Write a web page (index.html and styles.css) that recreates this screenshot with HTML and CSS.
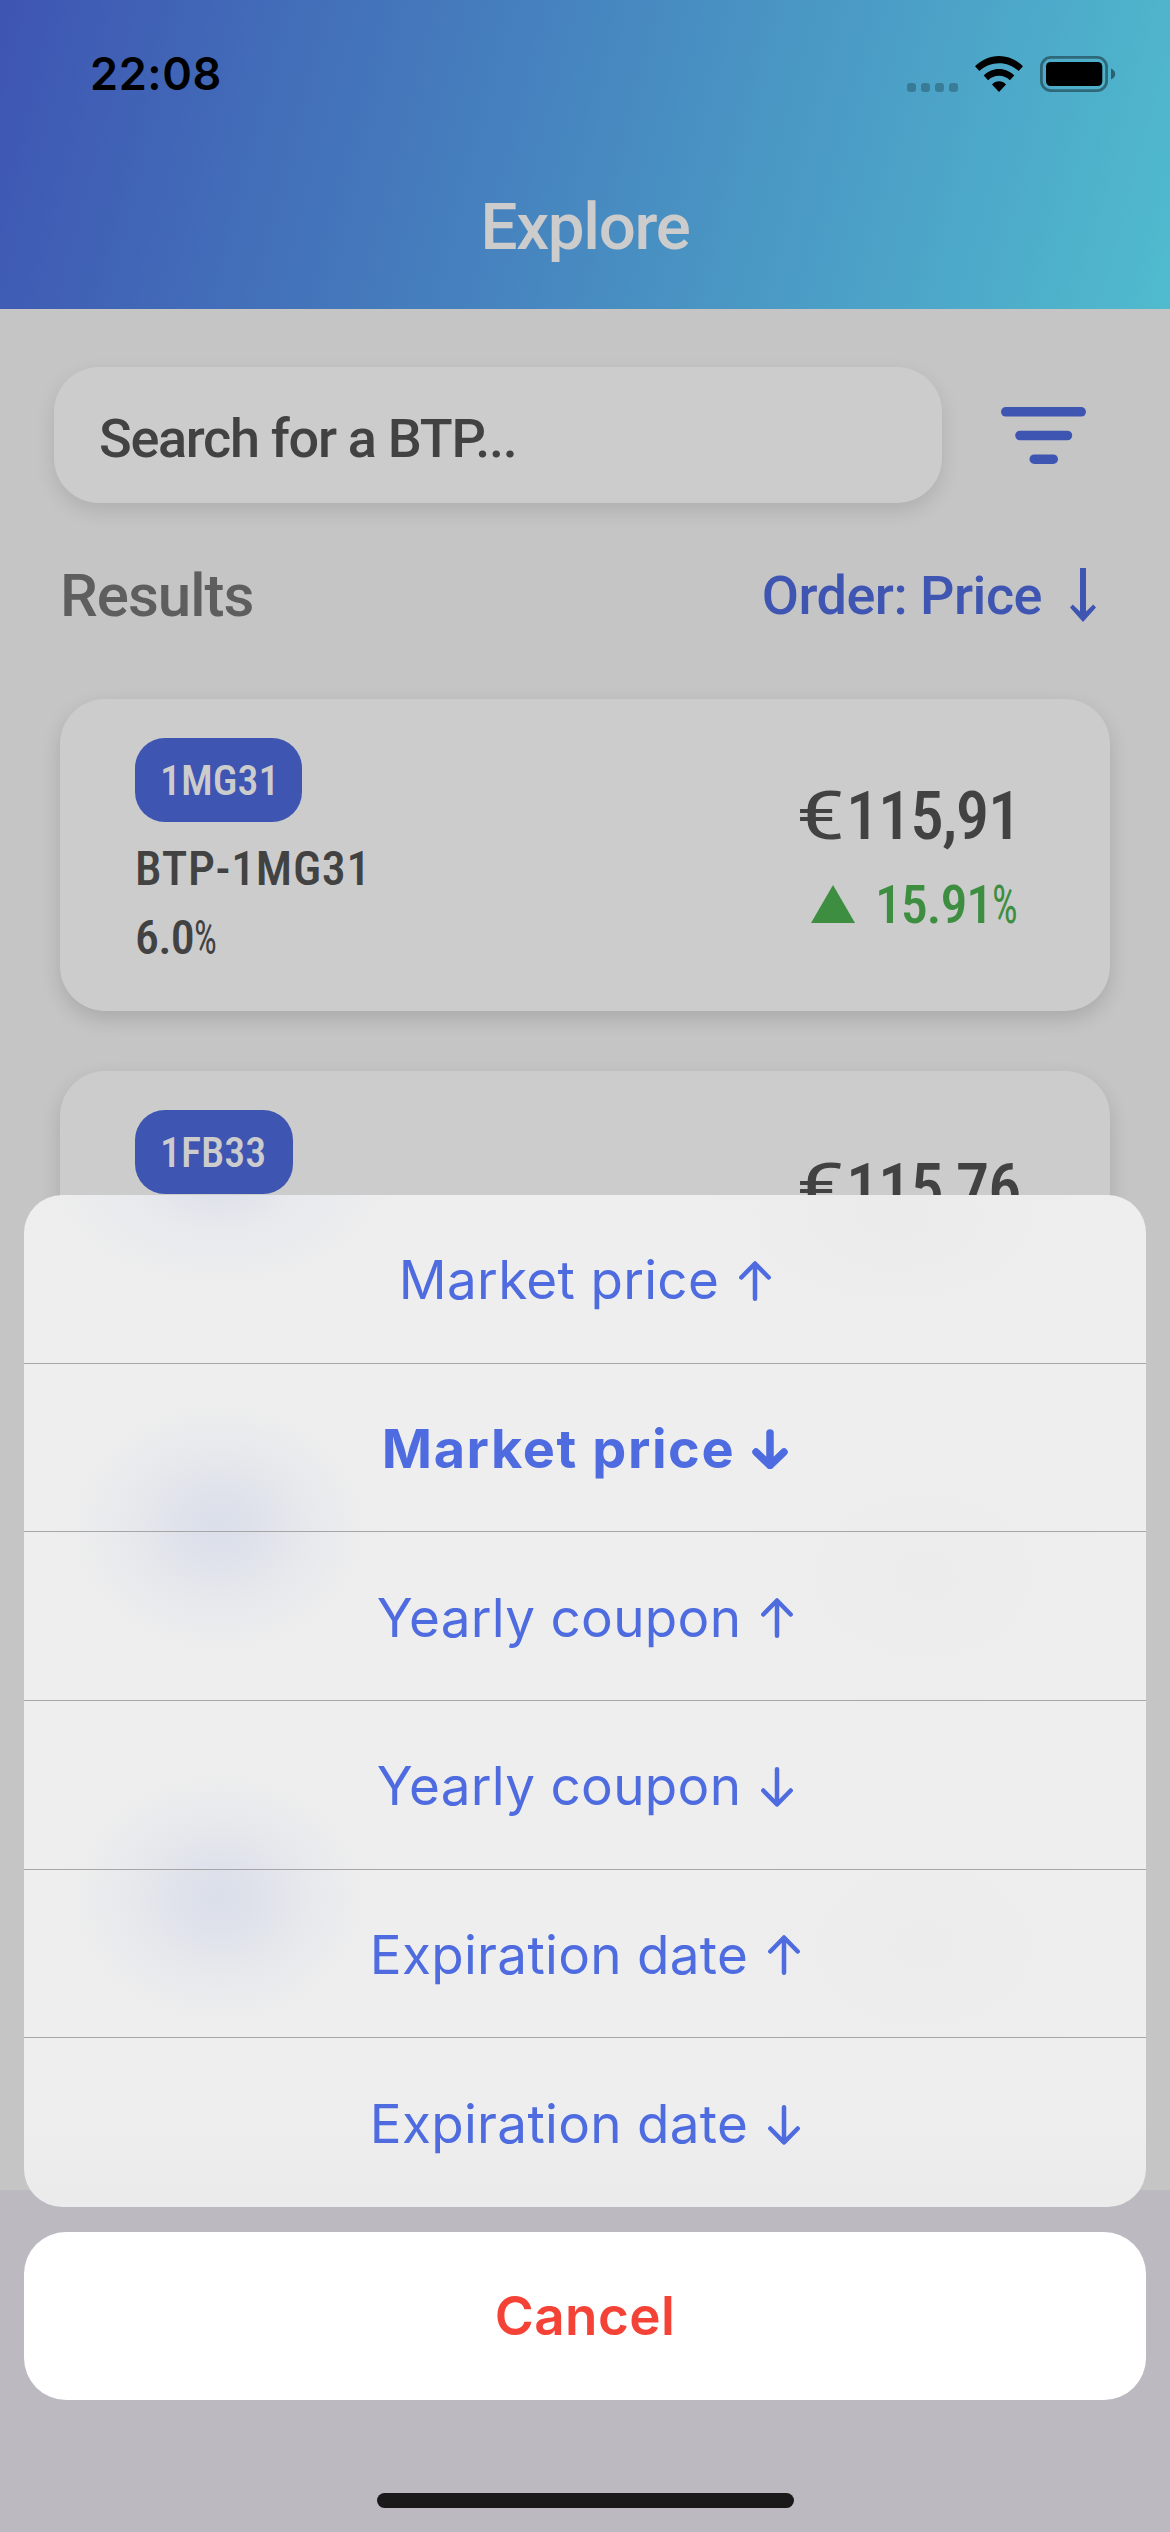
FILE: index.html
```html
<!DOCTYPE html>
<html lang="en">
<head>
<meta charset="utf-8">
<title>Explore</title>
<link rel="stylesheet" href="styles.css">
</head>
<body>
<div class="screen">
  <header class="header">
    <div class="status">
      <span class="time">22:08</span>
      <div class="status-icons">
        <svg class="dots" viewBox="0 0 51 9"><rect width="9" height="9" rx="3"/><rect x="14" width="9" height="9" rx="3"/><rect x="28" width="9" height="9" rx="3"/><rect x="42" width="9" height="9" rx="3"/></svg>
        <svg class="wifi" viewBox="0 0 48 36"><path d="M24 0C33 0 41.500 3.800 48 10.200L43.600 15C38.400 10.100 31.600 7.200 24 7.200S9.600 10.100 4.400 15L0 10.200C6.500 3.800 15 0 24 0ZM24 13C29.900 13 35.300 15.500 39.300 19.400L34.900 24.200C32 21.400 28.200 19.800 24 19.800S16 21.400 13.100 24.200L8.700 19.400C12.700 15.500 18.100 13 24 13ZM24 25.200C26.700 25.200 29.100 26.300 31 28.400L24 36L17 28.400C18.900 26.300 21.300 25.200 24 25.200Z"/></svg>
        <svg class="battery" viewBox="0 0 76 36"><rect x="1.400" y="1.400" width="65.200" height="33.200" rx="9.500" fill="none" stroke="#000" stroke-opacity=".4" stroke-width="2.800"/><rect x="6" y="6" width="56.300" height="24" rx="4.500"/><path d="M71 12.500C73.600 13.600 75.200 15.500 75.200 18S73.600 22.400 71 23.500Z" fill-opacity=".45"/></svg>
      </div>
    </div>
    <h1 class="title">Explore</h1>
  </header>

  <main class="content">
    <div class="search-row">
      <div class="search">Search for a BTP...</div>
      <svg class="filter" viewBox="0 0 85 57"><rect width="85" height="9.600" rx="4.800"/><rect x="14.200" y="23.700" width="57" height="9.600" rx="4.800"/><rect x="28.500" y="47.400" width="28.500" height="9.600" rx="4.800"/></svg>
    </div>
    <div class="results-row">
      <h2 class="results">Results</h2>
      <div class="order">
        <span>Order: Price</span>
        <svg class="order-arrow" viewBox="0 0 26 54"><path d="M10 0H16V43.500L23.300 36.600L26 39.600L13 54L0 39.600L2.700 36.600L10 43.500Z"/></svg>
      </div>
    </div>
    <div class="cards">
      <article class="card">
        <div class="info">
          <span class="badge">1MG31</span>
          <div class="line name">BTP-1MG31</div>
          <div class="line rate">6.0<span class="pct">%</span></div>
        </div>
        <div class="quote">
          <div class="price"><span class="euro">€</span>115,91</div>
          <div class="change">
            <svg class="up" viewBox="0 0 44 38"><path d="M22 0L44 38H0Z"/></svg>
            <div>15.91<span class="pct">%</span></div>
          </div>
        </div>
      </article>
      <article class="card">
        <div class="info">
          <span class="badge">1FB33</span>
        </div>
        <div class="quote">
          <div class="price"><span class="euro">€</span>115,76</div>
        </div>
      </article>
    </div>
  </main>

  <div class="tabbar"></div>

  <div class="overlay">
    <div class="sheet">
      <button class="option"><span>Market price</span><svg class="arrow" viewBox="0 0 32 40"><path d="M16 37.700V3M2.300 16.500L16 2.500L29.700 16.500"/></svg></button>
      <button class="option selected"><span>Market price</span><svg class="arrow" viewBox="0 0 36 40"><path d="M18 4V36M4 23L18 36.500L32 23"/></svg></button>
      <button class="option"><span>Yearly coupon</span><svg class="arrow" viewBox="0 0 32 40"><path d="M16 37.700V3M2.300 16.500L16 2.500L29.700 16.500"/></svg></button>
      <button class="option"><span>Yearly coupon</span><svg class="arrow" viewBox="0 0 32 40"><path d="M16 2.300V37M2.300 23.500L16 37.500L29.700 23.500"/></svg></button>
      <button class="option"><span>Expiration date</span><svg class="arrow" viewBox="0 0 32 40"><path d="M16 37.700V3M2.300 16.500L16 2.500L29.700 16.500"/></svg></button>
      <button class="option"><span>Expiration date</span><svg class="arrow" viewBox="0 0 32 40"><path d="M16 2.300V37M2.300 23.500L16 37.500L29.700 23.500"/></svg></button>
    </div>
    <button class="cancel">Cancel</button>
    <div class="home-indicator"></div>
  </div>
</div>
</body>
</html>
```
FILE: styles.css
```css
* { box-sizing: border-box; }

body { margin: 0; }

h1, h2 { margin: 0; }

button {
  border: 0;
  padding: 0;
  background: none;
}

svg { display: block; flex: none; }

.screen {
  position: relative;
  width: 1170px;
  height: 2532px;
  overflow: hidden;
  display: flex;
  flex-direction: column;
  background: #c5c5c5;
  font-family: Roboto, sans-serif;
  font-weight: 500;
  white-space: nowrap;
}

/* Header */
.header {
  height: 309px;
  flex: none;
  background: linear-gradient(104.8deg, #3e55b2, #50bbce);
}

.status {
  height: 148px;
  display: flex;
  align-items: center;
  justify-content: space-between;
  padding: 0 54px 0 90px;
}

.time {
  font: 600 45px/148px Inter, sans-serif;
  letter-spacing: 0.6px;
}

.status-icons { display: flex; align-items: center; }
.dots { width: 51px; height: 9px; margin: 26px 17px 0 0; fill: rgba(0, 0, 0, 0.24); }
.wifi { width: 48px; height: 36px; margin-right: 17px; }
.battery { width: 76px; height: 36px; }

.title {
  font-size: 65.5px;
  font-weight: 500;
  line-height: 157px;
  letter-spacing: -1.3px;
  text-align: center;
  color: #cccccc;
}

/* Content */
.content { height: 1881px; flex: none; overflow: hidden; }

.search-row {
  display: flex;
  align-items: center;
  padding: 58px 54px 0;
}

.search {
  width: 888px;
  height: 136px;
  padding: 4px 0 0 45px;
  border-radius: 45px;
  background: #cccccc;
  box-shadow: 0 8px 20px rgba(0, 0, 0, 0.11);
  font-size: 54px;
  line-height: 136px;
  letter-spacing: -1.3px;
  color: #424242;
}

.filter { width: 85px; height: 57px; margin-left: 59px; fill: #3e55b2; }

.results-row {
  display: flex;
  align-items: center;
  justify-content: space-between;
  height: 72px;
  margin-top: 56px;
  padding: 0 74px 0 60px;
}

.results {
  font-size: 60px;
  font-weight: 500;
  letter-spacing: -1px;
  color: #5e5e5e;
}

.order {
  display: flex;
  align-items: center;
  font-size: 54px;
  letter-spacing: -0.5px;
  color: #3e55b2;
}

.order-arrow { width: 26px; height: 54px; margin-left: 28px; fill: #3e55b2; }

.cards {
  display: flex;
  flex-direction: column;
  gap: 60px;
  padding: 68px 60px 0;
  font-stretch: 87.5%;
}

.card {
  display: flex;
  justify-content: space-between;
  height: 312px;
  padding: 0 75px;
  border-radius: 45px;
  background: #cccccc;
  box-shadow: 0 8px 20px rgba(0, 0, 0, 0.14);
  color: #424242;
}

.info {
  display: flex;
  flex-direction: column;
  align-items: flex-start;
  padding-top: 39px;
}

.badge {
  min-width: 158px;
  height: 84px;
  margin-bottom: 12px;
  padding: 0 23px 0 25px;
  border-radius: 30px;
  background: #3e55b2;
  font-size: 42px;
  line-height: 85px;
  color: #cccccc;
}

.line { font-size: 48px; line-height: 69px; }
.name { letter-spacing: 0.7px; }
.rate { letter-spacing: -0.8px; }

.pct {
  display: inline-block;
  font-stretch: 75%;
  font-weight: 400;
  transform: scaleX(0.75);
  transform-origin: left;
}

.quote { width: 239px; padding-top: 73px; }

.price { font-size: 67px; line-height: 88px; letter-spacing: -1.4px; }

.euro {
  display: inline-block;
  width: 50px;
  font-stretch: 100%;
  font-weight: 400;
  transform: scaleX(1.3);
  transform-origin: left;
}

.change {
  display: flex;
  align-items: center;
  gap: 20px;
  height: 88px;
  padding-left: 15px;
  font-size: 54px;
  letter-spacing: -1.2px;
  color: #3e8e41;
}

.up { width: 44px; height: 38px; fill: #3e8e41; }

.tabbar { height: 342px; flex: none; background: #bcb9c0; }

/* Action sheet */
.overlay {
  position: absolute;
  inset: 0;
  display: flex;
  flex-direction: column;
  justify-content: flex-end;
  gap: 25px;
  padding: 0 24px 132px;
}

.sheet {
  display: grid;
  grid-template-rows: repeat(6, 1fr);
  height: 1012px;
  border-radius: 38px;
  overflow: hidden;
  background:
    radial-gradient(180px 110px at 195px -12px, rgba(217, 220, 234, 0.8), rgba(224, 227, 236, 0.4) 45%, rgba(236, 237, 238, 0)),
    radial-gradient(165px 140px at 195px 332px, #dbdfea, rgba(219, 223, 234, 0.85) 20%, rgba(219, 223, 234, 0.35) 55%, rgba(219, 223, 234, 0.08) 82%, rgba(219, 223, 234, 0)),
    radial-gradient(165px 140px at 195px 703px, #dbdfea, rgba(219, 223, 234, 0.85) 20%, rgba(219, 223, 234, 0.35) 55%, rgba(219, 223, 234, 0.08) 82%, rgba(219, 223, 234, 0)),
    radial-gradient(200px 120px at 870px 20px, #ebebeb, rgba(235, 235, 235, 0)),
    radial-gradient(200px 150px at 900px 380px, #ebeceb, rgba(235, 236, 235, 0)),
    radial-gradient(200px 150px at 900px 750px, #ebeceb, rgba(235, 236, 235, 0)),
    linear-gradient(#eeeeee 90%, #ebebeb);
}

.option {
  display: flex;
  align-items: center;
  justify-content: center;
  padding-top: 4px;
  border-bottom: 1px solid #a6a6a6;
  font: 400 53px/1 Inter, sans-serif;
  letter-spacing: 0.3px;
  color: #4e6cdf;
}

.option:last-child { border-bottom: 0; }

.arrow {
  width: 32px;
  height: 40px;
  margin-left: 20px;
  fill: none;
  stroke: #4e6cdf;
  stroke-width: 4.500px;
  stroke-linecap: round;
  stroke-linejoin: round;
}

.selected { font-weight: 700; font-size: 54px; letter-spacing: 1.6px; }
.selected .arrow { width: 36px; margin-left: 17px; stroke-width: 7.500px; }

.cancel {
  height: 168px;
  border-radius: 42px;
  background: #ffffff;
  font: 600 53px/168px Inter, sans-serif;
  letter-spacing: 0.4px;
  color: #f44336;
}

.home-indicator {
  position: absolute;
  left: 377px;
  bottom: 24px;
  width: 417px;
  height: 15px;
  border-radius: 8px;
  background: #1a1a1a;
}
```
